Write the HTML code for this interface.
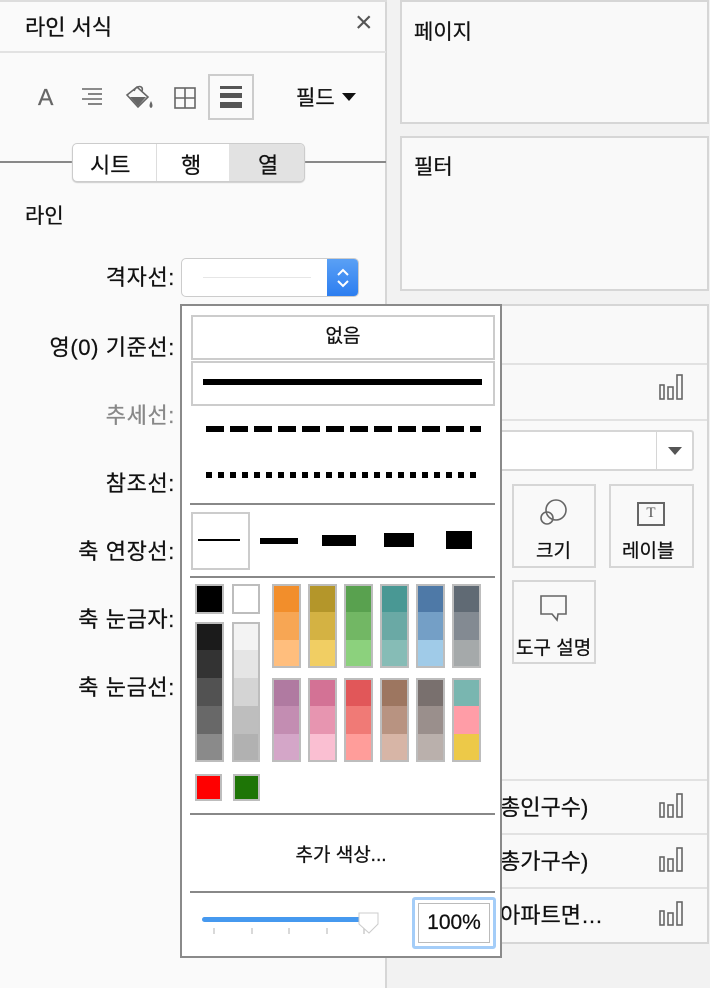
<!DOCTYPE html>
<html><head><meta charset="utf-8"><style>
*{box-sizing:border-box;margin:0;padding:0}
body{width:710px;height:988px;position:relative;overflow:hidden;background:#f2f2f2;font-family:"Liberation Sans","Noto Sans CJK KR",sans-serif;color:#111;-webkit-text-stroke:0.25px #111}
.a{position:absolute}
.lbl{position:absolute;right:535px;font-size:22px;letter-spacing:0.6px;text-align:right;white-space:nowrap}
.box{position:absolute;background:#f9f9f9;border:2px solid #d6d6d6}
.sw{position:absolute;border:2px solid #bdbdbd}
.sw div{width:100%}
.ic{stroke:#666;fill:none;stroke-width:1.6}
</style></head><body>
<div class="a" style="left:0;top:0;width:387px;height:988px;background:#fafafa;border-right:2px solid #d6d6d6"></div>
<div class="a" style="left:0;top:0;width:387px;height:2px;background:#ddd"></div>
<div class="a" style="left:25px;top:10px;font-size:22px">라인 서식</div>
<div class="a" style="left:355px;top:6px;font-size:30px;color:#555;-webkit-text-stroke:0">×</div>
<div class="a" style="left:0;top:51px;width:386px;height:2px;background:#e2e2e2"></div>
<div class="a" style="left:38px;top:84px;font-size:23px;color:#666;-webkit-text-stroke:0.3px #666">A</div>
<svg class="a" style="left:80px;top:86px" width="24" height="22"><g stroke="#666" stroke-width="1.6"><line x1="2" y1="3" x2="22" y2="3"/><line x1="8" y1="8" x2="22" y2="8"/><line x1="2" y1="13" x2="22" y2="13"/><line x1="8" y1="18" x2="22" y2="18"/></g></svg>
<svg class="a" style="left:124px;top:83px" width="32" height="28"><path d="M3 12 L13 4 L24 14 L14 24 Z" class="ic"/><path d="M6 14 L22 14 L14 23 Z" fill="#666"/><path d="M10 8 C12 2 20 2 18 8" class="ic"/><path d="M27 18 C25 22 25 24 27 25 C29 24 29 22 27 18Z" fill="#666"/></svg>
<svg class="a" style="left:173px;top:86px" width="24" height="24"><rect x="2" y="2" width="20" height="20" class="ic" stroke-width="1.8"/><line x1="12" y1="2" x2="12" y2="22" class="ic" stroke-width="1.8"/><line x1="2" y1="12" x2="22" y2="12" class="ic" stroke-width="1.8"/></svg>
<div class="a" style="left:208px;top:74px;width:46px;height:46px;border:2px solid #ccc;background:#fafafa"></div>
<div class="a" style="left:220px;top:86px;width:22px;height:3px;background:#555"></div>
<div class="a" style="left:220px;top:93px;width:22px;height:5px;background:#555"></div>
<div class="a" style="left:220px;top:102px;width:22px;height:6px;background:#555"></div>
<div class="a" style="left:296px;top:82px;font-size:21px">필드</div>
<svg class="a" style="left:342px;top:93px" width="14" height="8"><path d="M0 0H14L7 8Z" fill="#111"/></svg>
<div class="a" style="left:0;top:161px;width:386px;height:2px;background:#888"></div>
<div class="a" style="left:72px;top:143px;width:233px;height:39px;border:1px solid #ccc;border-radius:5px;background:#fff;overflow:hidden;box-shadow:0 1px 1px #ccc">
 <div class="a" style="left:83px;top:0;width:1px;height:38px;background:#ddd"></div>
 <div class="a" style="left:156px;top:0;width:77px;height:38px;background:#e2e2e2"></div>
 <div class="a" style="left:17px;top:4px;font-size:22px">시트</div>
 <div class="a" style="left:108px;top:4px;font-size:22px">행</div>
 <div class="a" style="left:185px;top:4px;font-size:22px">열</div>
</div>
<div class="a" style="left:25px;top:200px;font-size:21px">라인</div>
<div class="lbl" style="top:260px">격자선:</div>
<div class="lbl" style="top:330px">영(0) 기준선:</div>
<div class="lbl" style="top:398px;color:#888;-webkit-text-stroke:0.25px #888">추세선:</div>
<div class="lbl" style="top:466px">참조선:</div>
<div class="lbl" style="top:534px">축 연장선:</div>
<div class="lbl" style="top:602px">축 눈금자:</div>
<div class="lbl" style="top:670px">축 눈금선:</div>
<div class="a" style="left:181px;top:258px;width:178px;height:39px;border:1px solid #ccc;border-radius:5px;background:#fff;overflow:hidden">
 <div class="a" style="left:21px;top:18px;width:108px;height:1px;background:#e6e6e6"></div>
 <div class="a" style="left:145px;top:0;width:33px;height:39px;background:linear-gradient(#5aa0f5,#2a7cf0)"></div>
 <svg class="a" style="left:153px;top:8px" width="16" height="22"><path d="M3 8L8 3L13 8M3 14L8 19L13 14" stroke="#fff" stroke-width="2" fill="none"/></svg>
</div>
<div class="box" style="left:400px;top:0;width:309px;height:124px"></div>
<div class="a" style="left:414px;top:16px;font-size:21px">페이지</div>
<div class="box" style="left:400px;top:136px;width:309px;height:155px"></div>
<div class="a" style="left:414px;top:151px;font-size:21px">필터</div>
<div class="box" style="left:400px;top:304px;width:309px;height:640px"></div>
<div class="a" style="left:402px;top:363px;width:305px;height:2px;background:#e2e2e2"></div>
<div class="a" style="left:402px;top:419px;width:305px;height:2px;background:#e2e2e2"></div>
<div class="a" style="left:488px;top:430px;width:206px;height:41px;border:2px solid #d6d6d6;background:#fff;border-radius:3px"></div>
<div class="a" style="left:656px;top:432px;width:1px;height:37px;background:#d6d6d6"></div>
<svg class="a" style="left:668px;top:447px" width="14" height="8"><path d="M0 0H14L7 8Z" fill="#555"/></svg>
<div class="a" style="left:512px;top:484px;width:84px;height:84px;border:2px solid #d6d6d6;background:#f9f9f9"></div>
<svg class="a" style="left:538px;top:497px" width="32" height="32"><circle cx="18" cy="13" r="10" class="ic"/><circle cx="9" cy="21" r="6" class="ic" fill="#f9f9f9"/></svg>
<div class="a" style="left:536px;top:536px;font-size:19px">크기</div>
<div class="a" style="left:609px;top:484px;width:85px;height:84px;border:2px solid #d6d6d6;background:#f9f9f9"></div>
<div class="a" style="left:637px;top:502px;width:28px;height:24px;border:2px solid #666;font-size:15px;text-align:center;line-height:19px;font-family:'Liberation Serif',serif;color:#555;-webkit-text-stroke:0">T</div>
<div class="a" style="left:622px;top:536px;font-size:19px">레이블</div>
<div class="a" style="left:512px;top:580px;width:84px;height:84px;border:2px solid #d6d6d6;background:#f9f9f9"></div>
<svg class="a" style="left:538px;top:594px" width="32" height="30"><path d="M3 2H28V20H20L19 26L14 20H3Z" class="ic"/></svg>
<div class="a" style="left:516px;top:633px;font-size:19px">도구 설명</div>
<div class="a" style="left:402px;top:779px;width:305px;height:2px;background:#e2e2e2"></div>
<div class="a" style="left:402px;top:833px;width:305px;height:2px;background:#e2e2e2"></div>
<div class="a" style="left:402px;top:887px;width:305px;height:2px;background:#e2e2e2"></div>
<div class="a" style="left:500px;top:790px;font-size:22px">총인구수)</div>
<div class="a" style="left:500px;top:844px;font-size:22px">총가구수)</div>
<div class="a" style="left:500px;top:898px;font-size:22px">아파트면…</div>
<svg class="a" style="left:658px;top:373px" width="32" height="28"><g class="ic"><rect x="2" y="12" width="4" height="14"/><rect x="10" y="14" width="5" height="12"/><rect x="19" y="2" width="5" height="24"/></g></svg>
<svg class="a" style="left:658px;top:793px" width="32" height="28"><g class="ic"><rect x="2" y="10" width="4" height="14"/><rect x="10" y="12" width="5" height="12"/><rect x="19" y="1" width="5" height="23"/></g></svg>
<svg class="a" style="left:658px;top:847px" width="32" height="28"><g class="ic"><rect x="2" y="10" width="4" height="14"/><rect x="10" y="12" width="5" height="12"/><rect x="19" y="1" width="5" height="23"/></g></svg>
<svg class="a" style="left:658px;top:901px" width="32" height="28"><g class="ic"><rect x="2" y="10" width="4" height="14"/><rect x="10" y="12" width="5" height="12"/><rect x="19" y="1" width="5" height="23"/></g></svg>
<div class="a" style="left:180px;top:304px;width:322px;height:654px;background:#fff;border:2px solid #8a8a8a">
 <div class="a" style="left:9px;top:9px;width:304px;height:45px;border:2px solid #ccc;text-align:center;font-size:19px;line-height:40px">없음</div>
 <div class="a" style="left:9px;top:55px;width:304px;height:45px;border:2px solid #ccc"></div>
 <div class="a" style="left:21px;top:73px;width:279px;height:6px;background:#000"></div>
 <div class="a" style="left:24px;top:120px;width:275px;height:6px;background:repeating-linear-gradient(90deg,#000 0 18px,transparent 18px 24px)"></div>
 <div class="a" style="left:24px;top:166px;width:275px;height:6px;background:repeating-linear-gradient(90deg,#000 0 6px,transparent 6px 12px)"></div>
 <div class="a" style="left:8px;top:197px;width:305px;height:2px;background:#888"></div>
 <div class="a" style="left:9px;top:206px;width:59px;height:58px;border:2px solid #ccc"></div>
 <div class="a" style="left:16px;top:233px;width:42px;height:2px;background:#000"></div>
 <div class="a" style="left:78px;top:232px;width:38px;height:6px;background:#000"></div>
 <div class="a" style="left:140px;top:229px;width:34px;height:11px;background:#000"></div>
 <div class="a" style="left:202px;top:227px;width:30px;height:14px;background:#000"></div>
 <div class="a" style="left:264px;top:225px;width:26px;height:18px;background:#000"></div>
 <div class="a" style="left:8px;top:270px;width:305px;height:2px;background:#888"></div>
 <div class="a" style="left:8px;top:507px;width:305px;height:2px;background:#888"></div>
 <div class="a" style="left:0;top:534px;width:318px;text-align:center;font-size:19px">추가 색상...</div>
 <div class="a" style="left:8px;top:585px;width:305px;height:2px;background:#888"></div>
 <div class="a" style="left:20px;top:611px;width:160px;height:5px;border-radius:3px;background:#4699ef"></div>
 <svg class="a" style="left:20px;top:606px" width="180" height="30"><g stroke="#ccc" stroke-width="1.5"><line x1="12" y1="16" x2="12" y2="22"/><line x1="50" y1="16" x2="50" y2="22"/><line x1="87" y1="16" x2="87" y2="22"/><line x1="125" y1="16" x2="125" y2="22"/><line x1="162" y1="16" x2="162" y2="22"/></g><path d="M157 1H176V12L167 21L157 12Z" fill="#fff" stroke="#ccc"/></svg>
 <div class="a" style="left:230px;top:591px;width:84px;height:52px;border:3px solid #a4cdf8;border-radius:3px;padding:3px"><div style="border:1px solid #bbb;height:100%;font-size:21px;text-align:center;line-height:38px">100%</div></div>
</div>
<div class="sw" style="left:195px;top:584px;width:29px;height:30px;background:#000"></div>
<div class="sw" style="left:232px;top:584px;width:28px;height:30px;background:#fff"></div>
<div class="sw" style="left:195px;top:622px;width:29px;height:140px"><div style="height:26px;background:#1b1b1b"></div><div style="height:28px;background:#333"></div><div style="height:28px;background:#525252"></div><div style="height:28px;background:#686868"></div><div style="height:26px;background:#8a8a8a"></div></div>
<div class="sw" style="left:232px;top:622px;width:28px;height:140px"><div style="height:26px;background:#f3f3f3"></div><div style="height:28px;background:#e5e5e5"></div><div style="height:28px;background:#d4d4d4"></div><div style="height:28px;background:#bebebe"></div><div style="height:26px;background:#b1b1b1"></div></div>
<div class="sw" style="left:272px;top:584px;width:29px;height:84px"><div style="height:26px;background:#f28e2b"></div><div style="height:28px;background:#f7a654"></div><div style="height:26px;background:#ffbe7d"></div></div>
<div class="sw" style="left:308px;top:584px;width:29px;height:84px"><div style="height:26px;background:#b4962a"></div><div style="height:28px;background:#d4b243"></div><div style="height:26px;background:#f1ce63"></div></div>
<div class="sw" style="left:344px;top:584px;width:29px;height:84px"><div style="height:26px;background:#59a14f"></div><div style="height:28px;background:#72b764"></div><div style="height:26px;background:#8cd17d"></div></div>
<div class="sw" style="left:380px;top:584px;width:29px;height:84px"><div style="height:26px;background:#499894"></div><div style="height:28px;background:#6aa9a5"></div><div style="height:26px;background:#86bcb6"></div></div>
<div class="sw" style="left:416px;top:584px;width:29px;height:84px"><div style="height:26px;background:#4e79a7"></div><div style="height:28px;background:#749fc6"></div><div style="height:26px;background:#a0cbe8"></div></div>
<div class="sw" style="left:452px;top:584px;width:29px;height:84px"><div style="height:26px;background:#606a74"></div><div style="height:28px;background:#838a92"></div><div style="height:26px;background:#a5a9aa"></div></div>
<div class="sw" style="left:272px;top:678px;width:29px;height:84px"><div style="height:26px;background:#b07aa1"></div><div style="height:28px;background:#c38db2"></div><div style="height:26px;background:#d4a6c8"></div></div>
<div class="sw" style="left:308px;top:678px;width:29px;height:84px"><div style="height:26px;background:#d37295"></div><div style="height:28px;background:#e795b0"></div><div style="height:26px;background:#fabfd2"></div></div>
<div class="sw" style="left:344px;top:678px;width:29px;height:84px"><div style="height:26px;background:#e15759"></div><div style="height:28px;background:#f07a76"></div><div style="height:26px;background:#ff9d9a"></div></div>
<div class="sw" style="left:380px;top:678px;width:29px;height:84px"><div style="height:26px;background:#9d7660"></div><div style="height:28px;background:#b89381"></div><div style="height:26px;background:#d7b5a6"></div></div>
<div class="sw" style="left:416px;top:678px;width:29px;height:84px"><div style="height:26px;background:#79706e"></div><div style="height:28px;background:#9a8f8c"></div><div style="height:26px;background:#bab0ac"></div></div>
<div class="sw" style="left:452px;top:678px;width:29px;height:84px"><div style="height:26px;background:#79b6b0"></div><div style="height:28px;background:#ff9da7"></div><div style="height:26px;background:#edc948"></div></div>
<div class="sw" style="left:195px;top:774px;width:27px;height:27px;background:#f00"></div>
<div class="sw" style="left:233px;top:774px;width:27px;height:27px;background:#1e7506"></div>
</body></html>
